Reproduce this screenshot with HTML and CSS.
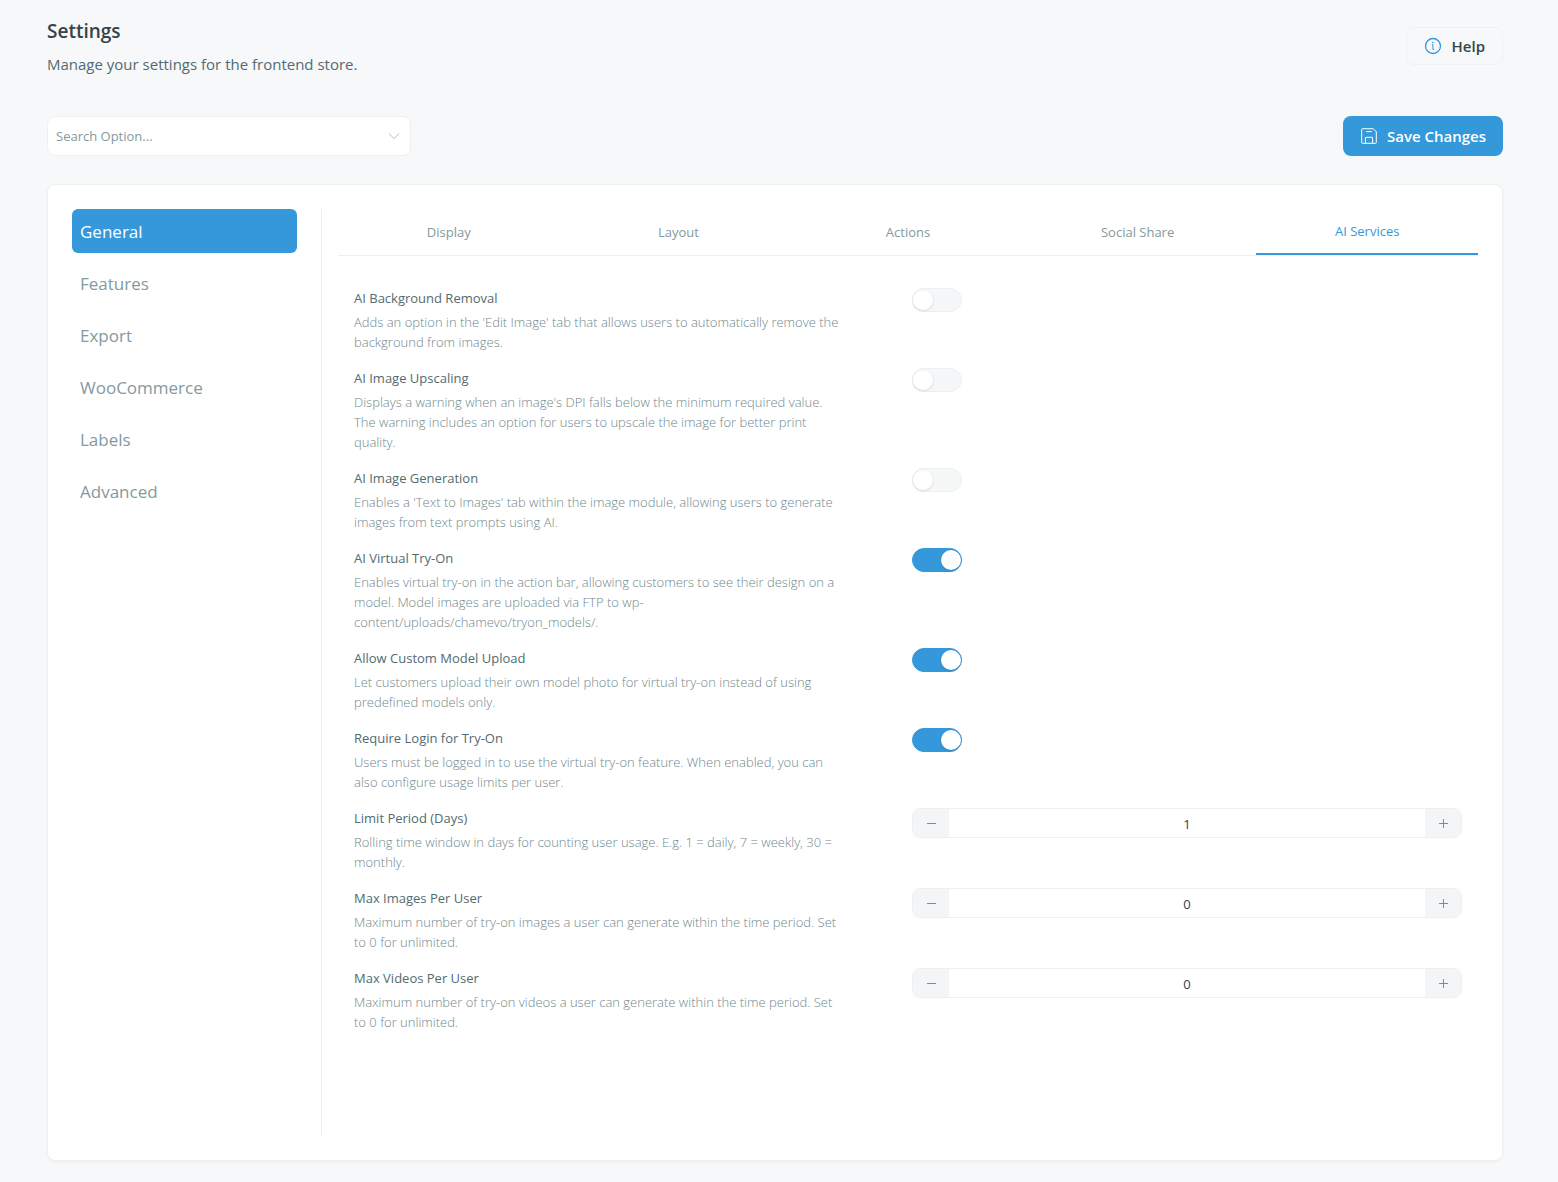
FILE: index.html
```
<!DOCTYPE html>
<html lang="en">
<head>
    <meta charset="UTF-8">
    <meta name="viewport" content="width=device-width, initial-scale=1.0">
    <title>Settings</title>
    <link rel="stylesheet" href="styles.css">
</head>

<body>
    <div class="page">
        <header class="page-header">
            <div>
                <h1>Settings</h1>
                <p class="subtitle">Manage your settings for the frontend store.</p>
            </div>
            <button type="button" class="btn btn-help">
                <svg width="18" height="18" viewBox="0 0 18 18" fill="none" stroke="currentColor" aria-hidden="true">
                    <circle cx="9" cy="9" r="7.5" stroke-width="1.3"/>
                    <path d="M7.8 7.6h1.1v4.8h1.2"/>
                    <circle cx="8.8" cy="5.5" r=".8" fill="currentColor" stroke="none"/>
                </svg>
                Help
            </button>
        </header>

        <div class="toolbar">
            <div class="search">
                <select aria-label="Search Option">
                    <option>Search Option...</option>
                </select>
                <svg class="chevron" width="12" height="8" viewBox="0 0 12 8" fill="none" stroke="currentColor" aria-hidden="true">
                    <path d="M1 1.5l5 5 5-5"/>
                </svg>
            </div>
            <button type="button" class="btn btn-save">
                <svg width="16" height="16" viewBox="0 0 16 16" fill="none" stroke="currentColor" aria-hidden="true">
                    <path d="M1.3.7h10.9l3.1 3.1v10.9q0 .6-.6.6H1.3q-.6 0-.6-.6V1.3q0-.6.6-.6z"/>
                    <path d="M4.4 15V9.9q0-.6.6-.6h6q.6 0 .6.6V15M5.2 3.6h5.6"/>
                </svg>
                Save Changes
            </button>
        </div>

        <main class="card">
            <nav class="sidebar">
                <a href="#general" class="active">General</a>
                <a href="#features">Features</a>
                <a href="#export">Export</a>
                <a href="#woocommerce">WooCommerce</a>
                <a href="#labels">Labels</a>
                <a href="#advanced">Advanced</a>
            </nav>

            <div class="content">
                <div class="tabs" role="tablist">
                    <button type="button" class="tab" role="tab">Display</button>
                    <button type="button" class="tab" role="tab">Layout</button>
                    <button type="button" class="tab" role="tab">Actions</button>
                    <button type="button" class="tab" role="tab">Social Share</button>
                    <button type="button" class="tab active" role="tab" aria-selected="true">AI Services</button>
                </div>

                <div class="options">
                    <div class="option">
                        <div class="option-text">
                            <label for="bgRemoval">AI Background Removal</label>
                            <p>Adds an option in the 'Edit Image' tab that allows users to automatically remove the background from images.</p>
                        </div>
                        <input type="checkbox" class="toggle" id="bgRemoval">
                    </div>
                    <div class="option">
                        <div class="option-text">
                            <label for="upscaling">AI Image Upscaling</label>
                            <p>Displays a warning when an image's DPI falls below the minimum required value. The warning includes an option for users to upscale the image for better print quality.</p>
                        </div>
                        <input type="checkbox" class="toggle" id="upscaling">
                    </div>
                    <div class="option">
                        <div class="option-text">
                            <label for="generation">AI Image Generation</label>
                            <p>Enables a 'Text to Images' tab within the image module, allowing users to generate images from text prompts using AI.</p>
                        </div>
                        <input type="checkbox" class="toggle" id="generation">
                    </div>
                    <div class="option">
                        <div class="option-text">
                            <label for="tryOn">AI Virtual Try-On</label>
                            <p>Enables virtual try-on in the action bar, allowing customers to see their design on a model. Model images are uploaded via FTP to wp-content/uploads/chamevo/tryon_models/.</p>
                        </div>
                        <input type="checkbox" class="toggle" id="tryOn" checked>
                    </div>
                    <div class="option">
                        <div class="option-text">
                            <label for="customModel">Allow Custom Model Upload</label>
                            <p>Let customers upload their own model photo for virtual try-on instead of using predefined models only.</p>
                        </div>
                        <input type="checkbox" class="toggle" id="customModel" checked>
                    </div>
                    <div class="option">
                        <div class="option-text">
                            <label for="requireLogin">Require Login for Try-On</label>
                            <p>Users must be logged in to use the virtual try-on feature. When enabled, you can also configure usage limits per user.</p>
                        </div>
                        <input type="checkbox" class="toggle" id="requireLogin" checked>
                    </div>
                    <div class="option">
                        <div class="option-text">
                            <label for="limitPeriod">Limit Period (Days)</label>
                            <p>Rolling time window in days for counting user usage. E.g. 1 = daily, 7 = weekly, 30 = monthly.</p>
                        </div>
                        <div class="stepper">
                            <button type="button" class="minus" aria-label="Decrease"></button>
                            <input type="text" id="limitPeriod" value="1">
                            <button type="button" class="plus" aria-label="Increase"></button>
                        </div>
                    </div>
                    <div class="option">
                        <div class="option-text">
                            <label for="maxImages">Max Images Per User</label>
                            <p>Maximum number of try-on images a user can generate within the time period. Set to 0 for unlimited.</p>
                        </div>
                        <div class="stepper">
                            <button type="button" class="minus" aria-label="Decrease"></button>
                            <input type="text" id="maxImages" value="0">
                            <button type="button" class="plus" aria-label="Increase"></button>
                        </div>
                    </div>
                    <div class="option">
                        <div class="option-text">
                            <label for="maxVideos">Max Videos Per User</label>
                            <p>Maximum number of try-on videos a user can generate within the time period. Set to 0 for unlimited.</p>
                        </div>
                        <div class="stepper">
                            <button type="button" class="minus" aria-label="Decrease"></button>
                            <input type="text" id="maxVideos" value="0">
                            <button type="button" class="plus" aria-label="Increase"></button>
                        </div>
                    </div>
                </div>
            </div>
        </main>
    </div>
</body>

</html>
```

FILE: styles.css
```
* {
    box-sizing: border-box;
}
body {
    margin: 0;
    background-color: #f7f8fa;
    color: #536b70;
    font-family: "Segoe UI", "Open Sans", "Noto Sans", sans-serif;
    font-size: 13px;
    line-height: 20px;
}
h1, p {
    margin: 0;
}
button, input, select {
    font: inherit;
    color: inherit;
}
button, select {
    cursor: pointer;
}

.page {
    display: flex;
    flex-direction: column;
    min-height: 100vh;
    padding: 16px 55px 21px 47px;
}
.page-header {
    display: flex;
    justify-content: space-between;
    align-items: center;
}
h1 {
    color: #344448;
    font-size: 19px;
    font-weight: 600;
    line-height: 30px;
}
.subtitle {
    margin-top: 6px;
    font-size: 15px;
    line-height: 24px;
}

.btn {
    display: flex;
    align-items: center;
    gap: 10px;
    border-radius: 8px;
    font-size: 15px;
    font-weight: 600;
}
.btn-help {
    height: 38px;
    padding: 0 17px;
    border: 1px solid #eff1f2;
    background: transparent;
    color: #344448;
}
.btn-help svg {
    color: #3498db;
}
.btn-save {
    height: 40px;
    padding: 0 17px 0 18px;
    border: none;
    background-color: #3498db;
    color: #fff;
}

.toolbar {
    display: flex;
    justify-content: space-between;
    margin: 40px 0 28px;
}
.search {
    position: relative;
    width: 25%;
}
.search select {
    width: 100%;
    height: 40px;
    padding: 0 30px 0 8px;
    border: 1px solid #ecf0f1;
    border-radius: 8px;
    background-color: #fff;
    color: #839a9d;
    appearance: none;
}
.chevron {
    position: absolute;
    top: 16px;
    right: 11px;
    color: #b0bfc1;
    pointer-events: none;
}

.card {
    display: flex;
    flex: 1;
    padding: 24px;
    border: 1px solid #ecf0f1;
    border-radius: 8px;
    background-color: #fff;
    box-shadow: 0 1px 3px rgba(0,0,0,0.04);
}
.sidebar {
    display: flex;
    flex-direction: column;
    flex: 0 0 250px;
    gap: 8px;
    padding-right: 24px;
    border-right: 1px solid #ecf0f1;
}
.sidebar a {
    padding: 11px 8px 9px;
    border-radius: 6px;
    color: #839a9d;
    font-size: 17px;
    line-height: 24px;
    text-decoration: none;
}
.sidebar a.active {
    background-color: #3498db;
    color: #fff;
}

.content {
    flex: 1;
    padding-left: 16px;
}
.tabs {
    display: grid;
    grid-template-columns: repeat(5, 1fr);
    gap: 8px;
    border-bottom: 1px solid #ecf0f1;
}
.tab {
    height: 46px;
    padding: 0;
    border: none;
    background: transparent;
    color: #839a9d;
}
.tab.active {
    border-bottom: 2px solid #3498db;
    color: #3498db;
}

.options {
    display: flex;
    flex-direction: column;
    gap: 16px;
    padding: 32px 16px;
}
.option {
    display: grid;
    grid-template-columns: 1fr 1fr;
    align-items: start;
    gap: 8px;
}
.option-text {
    padding-right: 64px;
}
.option-text label {
    display: block;
    margin-bottom: 4px;
}
.option-text p {
    color: #6f888c;
    font-weight: 300;
}

.toggle {
    display: flex;
    align-items: center;
    width: 50px;
    height: 24px;
    margin: 0;
    border: 1px solid #ecf0f1;
    border-radius: 12px;
    background-color: #f5f7f9;
    appearance: none;
    cursor: pointer;
}
.toggle::before {
    content: "";
    width: 20px;
    height: 20px;
    border-radius: 50%;
    background-color: #fff;
    box-shadow: 0 1px 3px rgba(0,0,0,0.12);
}
.toggle:checked {
    justify-content: flex-end;
    border-color: #3498db;
    background-color: #3498db;
}

.stepper {
    display: flex;
    height: 30px;
    border: 1px solid #ecf0f1;
    border-radius: 8px;
    overflow: hidden;
}
.stepper input {
    flex: 1;
    min-width: 0;
    padding: 2px 0 0;
    border: none;
    background-color: #fff;
    color: #2c3e50;
    text-align: center;
}
.stepper button {
    display: grid;
    place-items: center;
    width: 36px;
    padding: 0;
    border: none;
    background-color: #f4f5f7;
}
.minus::before, .plus::before, .plus::after {
    content: "";
    grid-area: 1 / 1;
    width: 9px;
    height: 1px;
    background-color: #7f8c8d;
}
.plus::after {
    width: 1px;
    height: 9px;
}
```
